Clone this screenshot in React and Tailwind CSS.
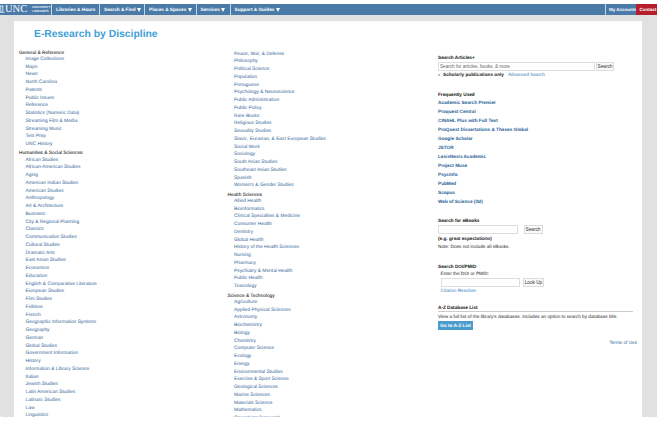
import React from "react";
import clsx from "clsx";

const navItems = [
  { label: "Libraries & Hours", width: "w-[48px]" },
  { label: "Search & Find", width: "w-[45px]", menu: true },
  { label: "Places & Spaces", width: "w-[51.5px]", menu: true },
  { label: "Services", width: "w-[34px]", menu: true },
  { label: "Support & Guides", width: "w-[54px]", menu: true },
];

const general = [
  "Image Collections",
  "Maps",
  "News",
  "North Carolina",
  "Patents",
  "Public Issues",
  "Reference",
  "Statistics (Numeric Data)",
  "Streaming Film & Media",
  "Streaming Music",
  "Test Prep",
  "UNC History",
];

const humanities = [
  "African Studies",
  "African-American Studies",
  "Aging",
  "American Indian Studies",
  "American Studies",
  "Anthropology",
  "Art & Architecture",
  "Business",
  "City & Regional Planning",
  "Classics",
  "Communication Studies",
  "Cultural Studies",
  "Dramatic Arts",
  "East Asian Studies",
  "Economics",
  "Education",
  "English & Comparative Literature",
  "European Studies",
  "Film Studies",
  "Folklore",
  "French",
  "Geographic Information Systems",
  "Geography",
  "German",
  "Global Studies",
  "Government Information",
  "History",
  "Information & Library Science",
  "Italian",
  "Jewish Studies",
  "Latin American Studies",
  "Latina/o Studies",
  "Law",
  "Linguistics",
];

const humanitiesMore = [
  "Peace, War, & Defense",
  "Philosophy",
  "Political Science",
  "Population",
  "Portuguese",
  "Psychology & Neuroscience",
  "Public Administration",
  "Public Policy",
  "Rare Books",
  "Religious Studies",
  "Sexuality Studies",
  "Slavic, Eurasian, & East European Studies",
  "Social Work",
  "Sociology",
  "South Asian Studies",
  "Southeast Asian Studies",
  "Spanish",
  "Women's & Gender Studies",
];

const health = [
  "Allied Health",
  "Bioinformatics",
  "Clinical Specialties & Medicine",
  "Consumer Health",
  "Dentistry",
  "Global Health",
  "History of the Health Sciences",
  "Nursing",
  "Pharmacy",
  "Psychiatry & Mental Health",
  "Public Health",
  "Toxicology",
];

const science = [
  "Agriculture",
  "Applied Physical Sciences",
  "Astronomy",
  "Biochemistry",
  "Biology",
  "Chemistry",
  "Computer Science",
  "Ecology",
  "Energy",
  "Environmental Studies",
  "Exercise & Sport Science",
  "Geological Sciences",
  "Marine Sciences",
  "Materials Science",
  "Mathematics",
  "Operations Research",
];

const frequent = [
  "Academic Search Premier",
  "Proquest Central",
  "CINAHL Plus with Full Text",
  "ProQuest Dissertations & Theses Global",
  "Google Scholar",
  "JSTOR",
  "LexisNexis Academic",
  "Project Muse",
  "PsycInfo",
  "PubMed",
  "Scopus",
  "Web of Science (ISI)",
];

function Discipline({ title, items }) {
  return (
    <section>
      {title && (
        <h2 className="h-[7.8px] pt-[1.6px] text-[4.8px] leading-[7.8px] text-[#111] [-webkit-text-stroke:0.04px_#111]">
          {title}
        </h2>
      )}
      <ul className="pl-[6.5px]">
        {items.map((item) => (
          <li key={item} className="h-[7.76px] whitespace-nowrap text-[4.87px] leading-[7.76px] text-[#326496]">
            <a href="#">{item}</a>
          </li>
        ))}
      </ul>
    </section>
  );
}

function FormButton({ children, className }) {
  return (
    <button
      className={clsx(
        "h-[9px] border border-[#dcdcdc] bg-[#fafafa] text-center text-[4.7px] leading-[7px] text-[#333]",
        className
      )}
    >
      {children}
    </button>
  );
}

function Header() {
  return (
    <header className="mt-1 flex h-[11px] overflow-hidden whitespace-nowrap bg-[#4a7ba8] text-[4.7px] font-bold leading-[11.5px] text-white">
      <div className="flex w-[51px] shrink-0">
        <svg className="mt-[1px] h-[8px] w-[5px]" viewBox="0 0 5 8" fill="none" stroke="#dce8f2">
          <path d="M0 1h3.5M0.8 1v6M2.8 1v6M0 7.3h4.5" strokeWidth="0.9" />
        </svg>
        <span className="w-[27px] font-['Liberation_Serif'] text-[10.5px] font-normal leading-[11px]">UNC</span>
        <span className="pt-[0.5px] text-[3.1px] leading-[4.5px] text-[#e8f0f7]">
          UNIVERSITY
          <br />
          LIBRARIES
        </span>
      </div>
      {navItems.map((item, i) => (
        <a
          key={item.label}
          href="#"
          className={clsx(
            "flex shrink-0 border-l border-[#c5d7e6] pl-1",
            item.width,
            i === navItems.length - 1 && "border-r-0"
          )}
        >
          {item.label}
          {item.menu && (
            <svg className="ml-[1.5px] mt-[3.5px] h-[4px] w-[4px]" viewBox="0 0 4 4" fill="#fff">
              <path d="M0 0h4L2 4z" />
            </svg>
          )}
        </a>
      ))}
      <a href="#" className="ml-auto w-[31px] shrink-0 border-l border-[#c5d7e6] pl-[3px] text-[4.5px]">
        My Accounts
      </a>
      <a href="#" className="w-[21px] shrink-0 bg-[#b51f2d] pl-[3.5px] text-[4.5px]">
        Contact
      </a>
    </header>
  );
}

function Sidebar() {
  return (
    <aside className="ml-auto w-[204px] pt-[32.6px] text-[4.7px] leading-[8px] text-[#222]">
      <h3 className="font-bold text-[#111]">Search Articles+</h3>
      <div className="flex">
        <input
          className="h-[9px] w-[157px] border border-[#ddd] px-px text-[4.65px] placeholder:text-[#666]"
          placeholder="Search for articles, books, & more"
        />
        <FormButton className="ml-px w-[18px]">Search</FormButton>
      </div>
      <div className="flex items-center">
        <span className="mr-[3px] h-[2px] w-[2px] bg-[#bbb]" />
        <b>Scholarly publications only</b>
        <a href="#" className="ml-1 text-[#2f78b8]">Advanced Search</a>
      </div>

      <h3 className="mt-[12px] font-bold text-[#111]">Frequently Used</h3>
      <ul className="font-bold text-[#275f96]">
        {frequent.map((item) => (
          <li key={item} className="h-[9.04px] leading-[7.5px]">
            <a href="#">{item}</a>
          </li>
        ))}
      </ul>

      <h3 className="mt-[10.5px] font-bold text-[#111]">Search for eBooks</h3>
      <div className="flex">
        <input className="h-[9px] w-[80px] border border-[#ddd]" />
        <FormButton className="ml-[5.5px] w-[19px]">Search</FormButton>
      </div>
      <p className="mt-[1px] font-bold">(e.g. great expectations)</p>
      <p>Note: Does not include all eBooks.</p>

      <h3 className="mt-[12px] font-bold text-[#111]">Search DOI/PMID</h3>
      <div className="pl-[2.5px]">
        <p className="leading-[6.5px]">Enter the DOI or PMID:</p>
        <div className="flex">
          <input className="h-[9px] w-[79px] border border-[#ddd]" />
          <FormButton className="ml-[3.5px] w-[21px]">Look Up</FormButton>
        </div>
        <a href="#" className="block text-[#2f7fc0]">Citation Resolver</a>
      </div>

      <h3 className="mt-[9.5px] w-[195px] border-b border-[#ccc] font-bold leading-[7px] text-[#111]">
        A-Z Database List
      </h3>
      <p className="mt-px whitespace-nowrap">
        View a full list of the library's databases. Includes an option to search by database title.
      </p>
      <a href="#" className="block h-[9px] w-[35px] bg-[#4a9ccc] text-center font-bold leading-[9px] text-white">
        Go to A-Z List
      </a>
      <a href="#" className="mt-[8.5px] block pr-[5px] text-right text-[#275f96]">
        Terms of Use
      </a>
    </aside>
  );
}

export default function App() {
  return (
    <div className="h-[426px] w-[657px] overflow-hidden bg-white font-['Liberation_Sans',Arial,sans-serif] [text-rendering:geometricPrecision]">
      <Header />
      <div className="h-[402px] overflow-hidden rounded-bl-xs bg-[#e1e1e2] px-[14px] pt-[6px]">
        <main className="mr-px flex h-[396px] bg-white pl-[5px]">
          <div className="w-[416px]">
            <h1 className="pl-[15px] pt-[7px] text-[10.35px] font-bold leading-[14px] text-[#419fd6]">
              E-Research by Discipline
            </h1>
            <div className="flex">
              <div className="w-[208.5px] pt-[6px]">
                <Discipline title="General & Reference" items={general} />
                <Discipline title="Humanities & Social Sciences" items={humanities} />
              </div>
              <div className="pt-[8.7px]">
                <Discipline items={humanitiesMore} />
                <Discipline title="Health Sciences" items={health} />
                <Discipline title="Science & Technology" items={science} />
              </div>
            </div>
          </div>
          <Sidebar />
        </main>
      </div>
    </div>
  );
}
